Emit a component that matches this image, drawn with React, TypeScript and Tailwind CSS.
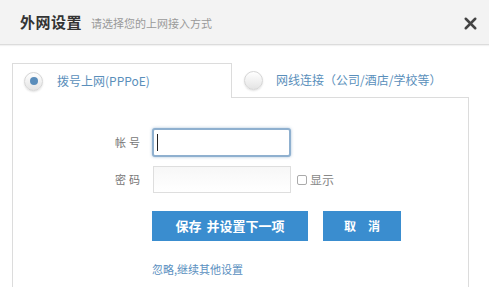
import { X } from 'lucide-react';

const font = { fontFamily: '"Noto Sans CJK SC", "Noto Sans", sans-serif' };

function Radio({ checked }: { checked?: boolean }) {
  return (
    <span className="flex h-[19px] w-[19px] items-center justify-center rounded-full border border-[#d6d6d6] bg-gradient-to-b from-white to-[#e4e4e4] shadow-[0_1px_2px_rgba(0,0,0,0.12)]">
      {checked && <span className="h-[8px] w-[8px] rounded-full bg-[#5a8dbb]" />}
    </span>
  );
}

export default function App() {
  return (
    <div className="h-[287px] w-[489px] overflow-hidden bg-white text-[#333]" style={font}>
      <div className="flex h-[45px] items-center border-b border-[#dcdcdc] bg-[#f3f3f3] pl-5 pr-[9px] shadow-[0_1px_1px_rgba(0,0,0,0.05)]">
        <h1 className="text-[15px] font-bold tracking-[0.5px] text-[#333]">外网设置</h1>
        <span className="ml-[9px] mt-[2px] text-[11px] text-[#999]">请选择您的上网接入方式</span>
        <X className="ml-auto mt-[2px] h-[19px] w-[19px] text-[#444]" strokeWidth={3.2} />
      </div>

      <div className="px-3 pt-[18px]">
        <div className="flex">
          <div className="flex h-[35px] w-[220px] items-center gap-[14px] border-l border-r border-t border-[#dcdcdc] pl-[11px]">
            <Radio checked />
            <span className="text-[12px] text-[#5a8fbb]">拨号上网(PPPoE)</span>
          </div>
          <div className="flex h-[35px] flex-1 items-center gap-[13px] border-b border-[#dcdcdc] pl-[12px]">
            <Radio />
            <span className="text-[12px] text-[#5a8fbb]">网线连接（公司/酒店/学校等）</span>
          </div>
          <div className="w-[8px]" />
        </div>

        <div className="mr-[8px] h-[200px] border-l border-r border-[#dcdcdc] pt-[30px]">
          <div className="flex items-center">
            <span className="flex w-[127px] justify-end gap-[3px] text-[11px] text-[#777]">
              <span>帐</span>
              <span>号</span>
            </span>
            <div className="ml-[12px] flex h-[29px] w-[139px] items-center rounded-[3px] border-2 border-[#8fb0cf] bg-white px-[3px] shadow-[0_0_3px_rgba(80,130,180,0.5)]">
              <span className="h-[17px] w-px bg-[#222]" />
            </div>
          </div>
          <div className="mt-[9px] flex items-center">
            <span className="flex w-[127px] justify-end gap-[3px] text-[11px] text-[#777]">
              <span>密</span>
              <span>码</span>
            </span>
            <div className="ml-[13px] h-[27px] w-[138px] border border-[#dedede] bg-gradient-to-b from-[#f7f7f7] to-white" />
            <span className="ml-[6px] h-[10px] w-[10px] rounded-[2px] border border-[#aaa] bg-white" />
            <span className="ml-[3px] text-[12px] text-[#888]">显示</span>
          </div>
          <div className="ml-[139px] mt-[18px] flex gap-[15px]">
            <button className="flex h-[30px] w-[156px] items-center justify-center gap-[5px] bg-[#3a8dcf] text-[13px] font-bold text-white">
              <span>保存</span>
              <span>并设置下一项</span>
            </button>
            <button className="flex h-[30px] w-[78px] items-center justify-center gap-[12px] bg-[#3a8dcf] text-[12px] font-bold text-white">
              <span>取</span>
              <span>消</span>
            </button>
          </div>
          <div className="ml-[139px] mt-[20px] text-[11px] text-[#5a8fc0]">忽略,继续其他设置</div>
        </div>
      </div>
    </div>
  );
}
